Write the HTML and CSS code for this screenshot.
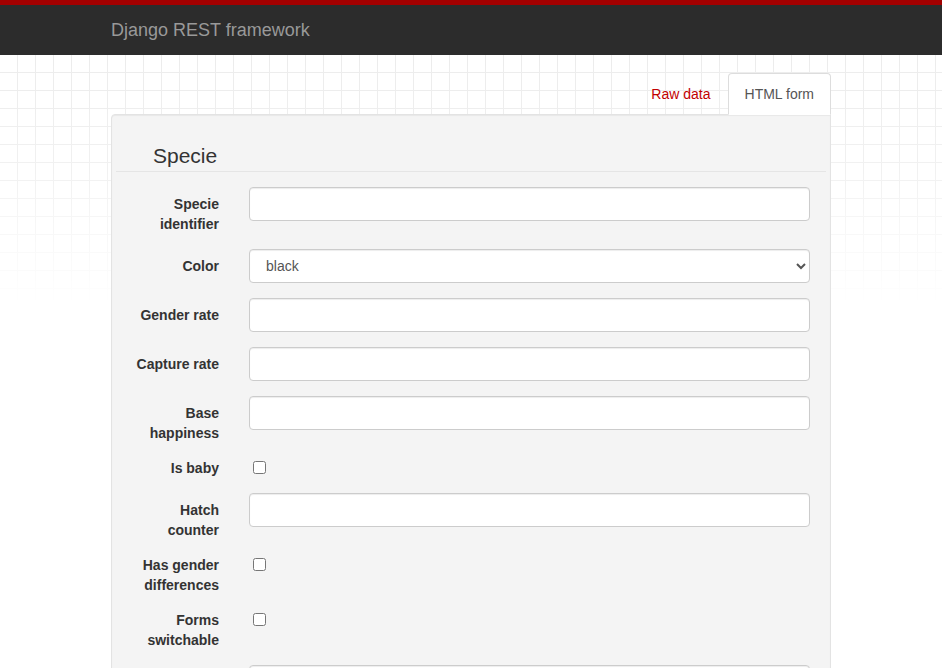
FILE: index.html
```html
<!DOCTYPE html>
<html lang="en">
<head>
<meta charset="utf-8">
<title>Specie – Django REST framework</title>
<link rel="stylesheet" href="styles.css">
</head>
<body>
<div class="grid-bg"></div>
<header class="navbar">
  <div class="container">
    <a class="brand" href="#">Django REST framework</a>
  </div>
</header>
<main class="container content">
  <ul class="tabs">
    <li><a class="tab" href="#">Raw data</a></li>
    <li><a class="tab active" href="#">HTML form</a></li>
  </ul>
  <div class="well">
    <form class="form">
      <div class="legend">Specie</div>

      <div class="row">
        <label class="label">Specie identifier</label>
        <div class="field"><input class="control" type="text"></div>
      </div>
      <div class="row">
        <label class="label">Color</label>
        <div class="field">
          <select class="control">
            <option>black</option>
            <option>blue</option>
            <option>brown</option>
            <option>gray</option>
            <option>green</option>
          </select>
        </div>
      </div>
      <div class="row">
        <label class="label">Gender rate</label>
        <div class="field"><input class="control" type="text"></div>
      </div>
      <div class="row">
        <label class="label">Capture rate</label>
        <div class="field"><input class="control" type="text"></div>
      </div>
      <div class="row">
        <label class="label">Base happiness</label>
        <div class="field"><input class="control" type="text"></div>
      </div>
      <div class="row check-row">
        <label class="label">Is baby</label>
        <div class="field"><input class="check" type="checkbox"></div>
      </div>
      <div class="row">
        <label class="label">Hatch counter</label>
        <div class="field"><input class="control" type="text"></div>
      </div>
      <div class="row check-row">
        <label class="label">Has gender differences</label>
        <div class="field"><input class="check" type="checkbox"></div>
      </div>
      <div class="row check-row">
        <label class="label">Forms switchable</label>
        <div class="field"><input class="check" type="checkbox"></div>
      </div>
      <div class="row">
        <label class="label">Order</label>
        <div class="field"><input class="control" type="text"></div>
      </div>
      <div class="row">
        <label class="label">Conquest order</label>
        <div class="field"><input class="control" type="text"></div>
      </div>
    </form>
  </div>
</main>
</body>
</html>
```

FILE: styles.css
```css
* { box-sizing: border-box; }

html, body {
  margin: 0;
  padding: 0;
}

body {
  font-family: "Liberation Sans", Arial, Helvetica, sans-serif;
  font-size: 14px;
  line-height: 20px;
  color: #333;
  background: #fff;
  position: relative;
}

.grid-bg {
  position: absolute;
  left: 0;
  right: 0;
  top: 55px;
  height: 250px;
  background-image:
    linear-gradient(to right, #ececec 1px, transparent 1px),
    linear-gradient(to bottom, #ececec 1px, transparent 1px);
  background-size: 18px 18px;
  background-position: 17px 17px;
  -webkit-mask-image: linear-gradient(to bottom, rgba(0,0,0,1) 0%, rgba(0,0,0,0.75) 45%, rgba(0,0,0,0) 100%);
  mask-image: linear-gradient(to bottom, rgba(0,0,0,1) 0%, rgba(0,0,0,0.75) 45%, rgba(0,0,0,0) 100%);
  z-index: 0;
}

.container {
  width: 720px;
  margin: 0 auto;
}

.navbar {
  position: relative;
  z-index: 1;
  background: #2c2c2c;
  border-top: 5px solid #a30000;
  height: 55px;
}

.navbar .container {
  display: flex;
  align-items: center;
  height: 50px;
}

.brand {
  color: #999;
  font-size: 18px;
  line-height: 20px;
  text-decoration: none;
}

.content {
  position: relative;
  z-index: 1;
  padding-top: 18px;
}

.tabs {
  list-style: none;
  margin: 0 0 -1px 0;
  padding: 0;
  display: flex;
  justify-content: flex-end;
  gap: 1px;
  position: relative;
  z-index: 2;
}

.tab {
  display: block;
  padding: 10px 15px;
  line-height: 20px;
  font-size: 14px;
  border: 1px solid transparent;
  border-radius: 4px 4px 0 0;
  color: #c20000;
  text-decoration: none;
}

.tab.active {
  padding: 10px 16px 10px 16px;
  color: #555;
  background: #fff;
  border-color: #ddd #ddd transparent #ddd;
}

.well {
  background: #f4f4f4;
  border: 1px solid #e3e3e3;
  border-radius: 4px 0 4px 4px;
  padding: 26px 4px 20px 4px;
  box-shadow: inset 0 1px 1px rgba(0,0,0,0.05);
}

.legend {
  font-size: 21px;
  line-height: 30px;
  color: #333;
  padding-left: 37px;
  border-bottom: 1px solid #e5e5e5;
  margin-bottom: 15px;
}

.row {
  display: grid;
  grid-template-columns: 90px 1fr;
  column-gap: 30px;
  padding-left: 13px;
  padding-right: 16px;
  margin-bottom: 15px;
}

.label {
  font-weight: bold;
  text-align: right;
  padding-top: 7px;
  line-height: 20px;
}

.check-row .label {
  padding-top: 0;
}

.check-row .field {
  min-height: 20px;
}

.control {
  display: block;
  width: 100%;
  height: 34px;
  padding: 6px 12px;
  font-family: "Liberation Sans", Arial, Helvetica, sans-serif;
  font-size: 14px;
  line-height: 20px;
  color: #555;
  background: #fff;
  border: 1px solid #ccc;
  border-radius: 4px;
  box-shadow: inset 0 1px 1px rgba(0,0,0,0.075);
}

.check {
  display: block;
  margin: 3px 3px 3px 4px;
  width: 13px;
  height: 13px;
}
```
